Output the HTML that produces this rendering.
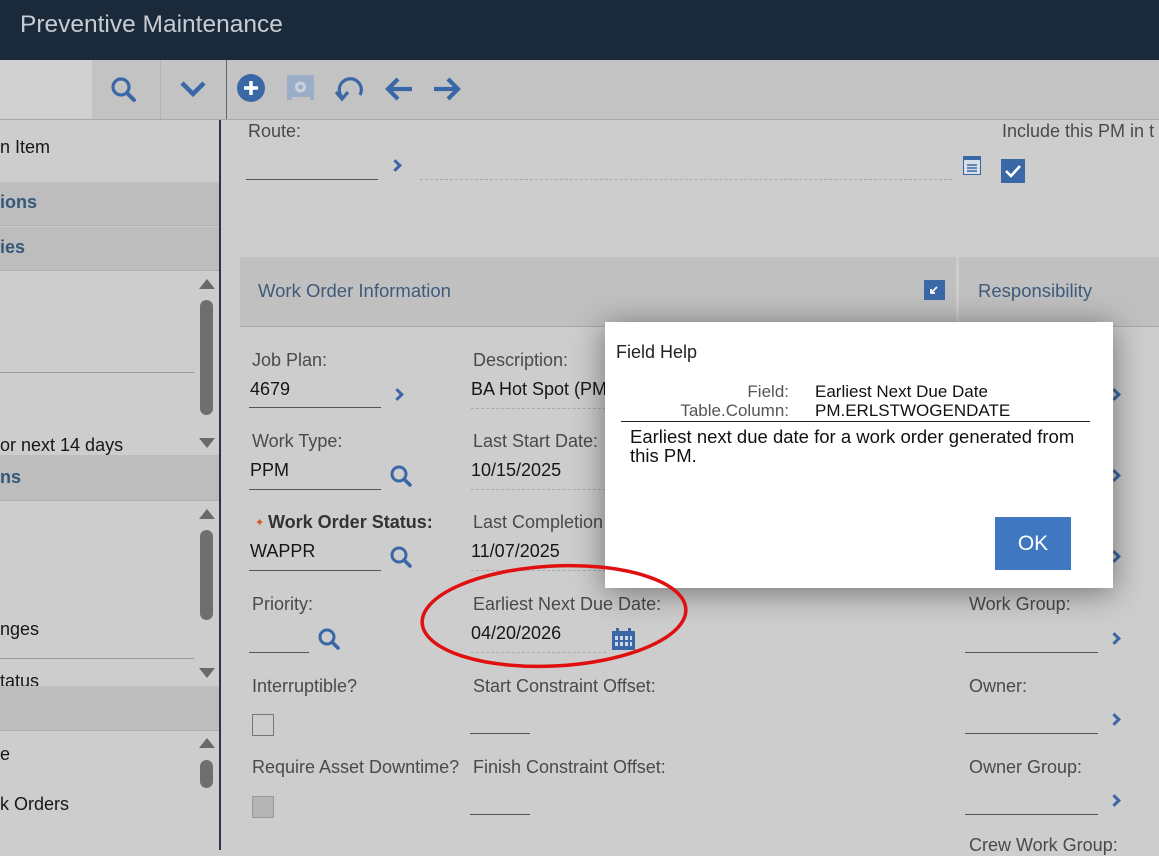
<!DOCTYPE html>
<html><head><meta charset="utf-8"><style>
*{margin:0;padding:0;box-sizing:border-box}
body{width:1159px;height:850px;overflow:hidden;background:#cdcdcd;font-family:"Liberation Sans",sans-serif;position:relative;color:#1a1a1a}
.a{position:absolute;white-space:nowrap}
.lbl{font-size:18px;color:#4a4a4a}
.val{font-size:18px;color:#161616}
.ul{position:absolute;height:1px;background:#555}
.dl{position:absolute;border-top:1px dashed #aaa;height:0}
.sh{position:absolute;background:#bdbdbd;border-bottom:1px solid #b0b0b0}
.sht{font-size:18px;font-weight:bold;color:#35587a}
.chev{position:absolute;width:9px;height:9px;border-top:3px solid #3a68a6;border-right:3px solid #3a68a6;transform:rotate(45deg)}
.tri-up{position:absolute;width:0;height:0;border-left:8px solid transparent;border-right:8px solid transparent;border-bottom:10px solid #6a6a6a}
.tri-dn{position:absolute;width:0;height:0;border-left:8px solid transparent;border-right:8px solid transparent;border-top:10px solid #6a6a6a}
.sb{position:absolute;width:13px;background:#6f6f6f;border-radius:7px}
</style></head><body>
<div class="a" style="left:0;top:0;width:1159px;height:60px;background:#1a2a3b"></div>
<div class="a" style="left:20px;top:11px;font-size:24.5px;color:#c8ccd2">Preventive Maintenance</div>
<!-- toolbar -->
<div class="a" style="left:0;top:60px;width:1159px;height:60px;background:#c3c3c3;border-bottom:1px solid #a8a8a8"></div>
<div class="a" style="left:0;top:60px;width:92px;height:59px;background:#d1d1d1"></div>
<div class="a" style="left:160px;top:60px;width:1px;height:59px;background:#b5b5b5"></div>
<div class="a" style="left:226px;top:60px;width:1px;height:59px;background:#666"></div>
<svg class="a" style="left:108px;top:74px" width="32" height="32" viewBox="0 0 32 32"><circle cx="13" cy="13" r="8" fill="none" stroke="#3a68a6" stroke-width="3.2"/><line x1="19" y1="19" x2="26" y2="26" stroke="#3a68a6" stroke-width="4" stroke-linecap="round"/></svg>
<svg class="a" style="left:178px;top:78px" width="30" height="22" viewBox="0 0 30 22"><polyline points="4,5 15,16 26,5" fill="none" stroke="#3a68a6" stroke-width="4.5"/></svg>
<svg class="a" style="left:236px;top:73px" width="30" height="30" viewBox="0 0 30 30"><circle cx="15" cy="15" r="14" fill="#3a68a6"/><path d="M15 8v14M8 15h14" stroke="#fff" stroke-width="3.5"/></svg>
<svg class="a" style="left:286px;top:74px" width="30" height="30" viewBox="0 0 30 30"><path d="M1 1h27v25h-4v-3h-18v3h-5z" fill="#9aaec7"/><circle cx="14.5" cy="13" r="4" fill="none" stroke="#c9d2dd" stroke-width="3"/></svg>
<svg class="a" style="left:333px;top:73px" width="34" height="32" viewBox="0 0 34 32"><path d="M9 24 A11 11 0 1 1 27 22" fill="none" stroke="#3a68a6" stroke-width="3.2"/><polyline points="3,19 9,26 15,19" fill="none" stroke="#3a68a6" stroke-width="3.2"/></svg>
<svg class="a" style="left:383px;top:74px" width="32" height="30" viewBox="0 0 32 30"><path d="M29 15H6M15 5L5 15l10 10" fill="none" stroke="#3a68a6" stroke-width="4.2"/></svg>
<svg class="a" style="left:431px;top:74px" width="32" height="30" viewBox="0 0 32 30"><path d="M3 15h23M17 5l10 10-10 10" fill="none" stroke="#3a68a6" stroke-width="4.2"/></svg>
<!-- left panel -->
<div class="a" style="left:219px;top:120px;width:2px;height:730px;background:#2a3442"></div>
<div class="a val" style="left:0;top:137px">n Item</div>
<div class="sh" style="left:0;top:182px;width:219px;height:44px"></div>
<div class="a sht" style="left:0;top:192px">ions</div>
<div class="sh" style="left:0;top:227px;width:219px;height:44px"></div>
<div class="a sht" style="left:0;top:237px">ies</div>
<div class="tri-up" style="left:199px;top:279px"></div>
<div class="sb" style="left:200px;top:300px;height:115px"></div>
<div class="tri-dn" style="left:199px;top:438px"></div>
<div class="ul" style="left:0;top:372px;width:194px;background:#999"></div>
<div class="a val" style="left:0;top:435px">or next 14 days</div>
<div class="sh" style="left:0;top:455px;width:219px;height:46px"></div>
<div class="a sht" style="left:0;top:467px">ns</div>
<div class="tri-up" style="left:199px;top:509px"></div>
<div class="sb" style="left:200px;top:530px;height:90px"></div>
<div class="tri-dn" style="left:199px;top:668px"></div>
<div class="a val" style="left:0;top:619px">nges</div>
<div class="ul" style="left:0;top:658px;width:194px;background:#999"></div>
<div style="position:absolute;left:0;top:671px;width:195px;height:15px;overflow:hidden"><div class="a val" style="left:0;top:0">tatus</div></div>
<div class="sh" style="left:0;top:686px;width:219px;height:45px"></div>
<div class="tri-up" style="left:199px;top:738px"></div>
<div class="sb" style="left:200px;top:760px;height:28px"></div>
<div class="a val" style="left:0;top:744px">e</div>
<div class="a val" style="left:0;top:794px">k Orders</div>
<!-- main top -->
<div class="a lbl" style="left:248px;top:121px">Route:</div>
<div class="ul" style="left:246px;top:179px;width:132px"></div>
<div class="chev" style="left:391px;top:161px"></div>
<div class="dl" style="left:420px;top:179px;width:532px"></div>
<svg class="a" style="left:963px;top:156px" width="18" height="19" viewBox="0 0 18 19"><rect x="0.5" y="0.5" width="17" height="18" fill="#d8dee8" stroke="#3a68a6"/><rect x="0" y="0" width="18" height="4" fill="#3a68a6"/><path d="M4 9h10M4 12h10M4 15h10" stroke="#3a68a6" stroke-width="1.4"/></svg>
<div class="a lbl" style="left:1002px;top:121px">Include this PM in t</div>
<svg class="a" style="left:1001px;top:159px" width="24" height="24" viewBox="0 0 24 24"><rect width="24" height="24" fill="#3a68a6"/><polyline points="5,12 10,17 19,7" fill="none" stroke="#fff" stroke-width="2.6"/></svg>
<!-- section headers -->
<div class="a" style="left:240px;top:257px;width:716px;height:70px;background:#c0c0c0;border-bottom:1px solid #aaa"></div>
<div class="a" style="left:258px;top:280px;font-size:18.5px;color:#3e5b7b">Work Order Information</div>
<svg class="a" style="left:924px;top:280px" width="21" height="20" viewBox="0 0 21 20"><rect width="21" height="20" fill="#3a68a6"/><path d="M13 7L7 13M7 9v4h4" fill="none" stroke="#fff" stroke-width="1.8"/></svg>
<div class="a" style="left:959px;top:257px;width:200px;height:70px;background:#c0c0c0;border-bottom:1px solid #aaa"></div>
<div class="a" style="left:978px;top:280px;font-size:18.5px;color:#3e5b7b">Responsibility</div>
<!-- col1 -->
<div class="a lbl" style="left:252px;top:350px">Job Plan:</div>
<div class="a val" style="left:250px;top:379px">4679</div>
<div class="ul" style="left:249px;top:407px;width:132px"></div>
<div class="chev" style="left:393px;top:390px"></div>
<div class="a lbl" style="left:252px;top:431px">Work Type:</div>
<div class="a val" style="left:250px;top:460px">PPM</div>
<div class="ul" style="left:249px;top:489px;width:132px"></div>
<svg class="a" style="left:388px;top:463px" width="26" height="26" viewBox="0 0 26 26"><circle cx="11" cy="11" r="7" fill="none" stroke="#3a68a6" stroke-width="3"/><line x1="16" y1="16" x2="22" y2="22" stroke="#3a68a6" stroke-width="3.6" stroke-linecap="round"/></svg>
<div class="a" style="left:255px;top:516px;font-size:11px;color:#d9531e">✦</div>
<div class="a" style="left:268px;top:512px;font-size:18px;font-weight:bold;color:#333">Work Order Status:</div>
<div class="a val" style="left:250px;top:541px">WAPPR</div>
<div class="ul" style="left:249px;top:570px;width:132px"></div>
<svg class="a" style="left:388px;top:544px" width="26" height="26" viewBox="0 0 26 26"><circle cx="11" cy="11" r="7" fill="none" stroke="#3a68a6" stroke-width="3"/><line x1="16" y1="16" x2="22" y2="22" stroke="#3a68a6" stroke-width="3.6" stroke-linecap="round"/></svg>
<div class="a lbl" style="left:252px;top:594px">Priority:</div>
<div class="ul" style="left:249px;top:652px;width:60px"></div>
<svg class="a" style="left:316px;top:626px" width="26" height="26" viewBox="0 0 26 26"><circle cx="11" cy="11" r="7" fill="none" stroke="#3a68a6" stroke-width="3"/><line x1="16" y1="16" x2="22" y2="22" stroke="#3a68a6" stroke-width="3.6" stroke-linecap="round"/></svg>
<div class="a lbl" style="left:252px;top:676px">Interruptible?</div>
<div class="a" style="left:252px;top:714px;width:22px;height:22px;border:1.5px solid #777"></div>
<div class="a lbl" style="left:252px;top:757px">Require Asset Downtime?</div>
<div class="a" style="left:252px;top:796px;width:22px;height:22px;border:1.5px solid #999;background:#b5b5b5"></div>
<!-- col2 -->
<div class="a lbl" style="left:473px;top:350px">Description:</div>
<div class="a val" style="left:471px;top:379px">BA Hot Spot (PM</div>
<div class="dl" style="left:471px;top:408px;width:135px"></div>
<div class="a lbl" style="left:473px;top:431px">Last Start Date:</div>
<div class="a val" style="left:471px;top:460px">10/15/2025</div>
<div class="dl" style="left:471px;top:489px;width:135px"></div>
<div class="a lbl" style="left:473px;top:512px">Last Completion</div>
<div class="a val" style="left:471px;top:541px">11/07/2025</div>
<div class="dl" style="left:471px;top:570px;width:135px"></div>
<div class="a lbl" style="left:473px;top:594px">Earliest Next Due Date:</div>
<div class="a val" style="left:471px;top:623px">04/20/2026</div>
<div class="dl" style="left:471px;top:652px;width:135px"></div>
<svg class="a" style="left:612px;top:628px" width="23" height="22" viewBox="0 0 23 22"><rect x="0" y="3" width="23" height="19" fill="#3a68a6"/><rect x="4" y="0" width="3" height="5" fill="#3a68a6"/><rect x="16" y="0" width="3" height="5" fill="#3a68a6"/><g fill="#cdd6e3"><rect x="3" y="8" width="3" height="4"/><rect x="8" y="8" width="3" height="4"/><rect x="13" y="8" width="3" height="4"/><rect x="18" y="8" width="2" height="4"/><rect x="3" y="14" width="3" height="4"/><rect x="8" y="14" width="3" height="4"/><rect x="13" y="14" width="3" height="4"/><rect x="18" y="14" width="2" height="4"/></g></svg>
<div class="a lbl" style="left:473px;top:676px">Start Constraint Offset:</div>
<div class="ul" style="left:470px;top:733px;width:60px"></div>
<div class="a lbl" style="left:473px;top:757px">Finish Constraint Offset:</div>
<div class="ul" style="left:470px;top:814px;width:60px"></div>
<!-- right col -->
<div class="chev" style="left:1110px;top:390px"></div>
<div class="chev" style="left:1110px;top:471px"></div>
<div class="chev" style="left:1110px;top:552px"></div>
<div class="a lbl" style="left:969px;top:594px">Work Group:</div>
<div class="ul" style="left:965px;top:652px;width:133px"></div>
<div class="chev" style="left:1110px;top:634px"></div>
<div class="a lbl" style="left:969px;top:676px">Owner:</div>
<div class="ul" style="left:965px;top:733px;width:133px"></div>
<div class="chev" style="left:1110px;top:715px"></div>
<div class="a lbl" style="left:969px;top:757px">Owner Group:</div>
<div class="ul" style="left:965px;top:814px;width:133px"></div>
<div class="chev" style="left:1110px;top:796px"></div>
<div class="a lbl" style="left:969px;top:835px">Crew Work Group:</div>
<!-- dialog -->
<div class="a" style="left:605px;top:322px;width:508px;height:266px;background:#fff;box-shadow:0 4px 30px rgba(0,0,0,.45)"></div>
<div class="a" style="left:616px;top:342px;font-size:18px;color:#222">Field Help</div>
<div class="a" style="left:580px;top:382px;width:209px;text-align:right;font-size:17px;color:#555;line-height:19px">Field:<br>Table.Column:</div>
<div class="a" style="left:815px;top:382px;font-size:17px;color:#111;line-height:19px">Earliest Next Due Date<br>PM.ERLSTWOGENDATE</div>
<div class="a" style="left:621px;top:421px;width:469px;height:1px;background:#222"></div>
<div class="a" style="left:630px;top:427px;font-size:18.5px;color:#111;line-height:19px">Earliest next due date for a work order generated from<br>this PM.</div>
<div class="a" style="left:995px;top:517px;width:76px;height:53px;background:#3f78c0;color:#fff;font-size:21px;text-align:center;line-height:53px">OK</div>
<!-- red ellipse -->
<svg class="a" style="left:0;top:0;pointer-events:none" width="1159" height="850"><ellipse cx="554" cy="616" rx="132" ry="50" fill="none" stroke="#e01010" stroke-width="3.5" transform="rotate(-3 554 616)"/></svg>
</body></html>
